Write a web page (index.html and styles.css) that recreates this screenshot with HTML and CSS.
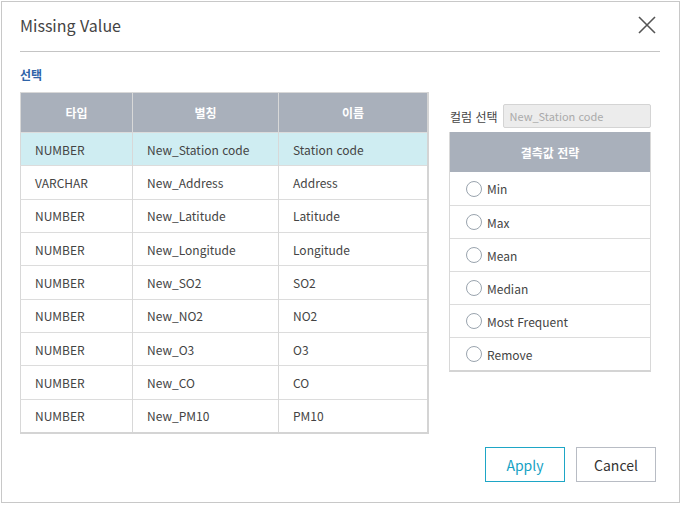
FILE: index.html
```html
<!DOCTYPE html>
<html lang="ko">
<head>
<meta charset="utf-8">
<link rel="stylesheet" href="styles.css">
</head>
<body>
<div class="dialog">
  <div class="dlg-head">
    <h1 class="dlg-title">Missing Value</h1>
    <svg class="close" width="20" height="20" viewBox="0 0 20 20"><path d="M2 2 L18 18 M18 2 L2 18" stroke="#555" stroke-width="1.6" fill="none"/></svg>
  </div>
  <div class="section-label">선택</div>
  <div class="content">
    <table class="grid">
      <thead>
        <tr><th class="c1">타입</th><th class="c2">별칭</th><th class="c3">이름</th></tr>
      </thead>
      <tbody>
        <tr class="sel"><td>NUMBER</td><td>New_Station code</td><td>Station code</td></tr>
        <tr><td>VARCHAR</td><td>New_Address</td><td>Address</td></tr>
        <tr><td>NUMBER</td><td>New_Latitude</td><td>Latitude</td></tr>
        <tr><td>NUMBER</td><td>New_Longitude</td><td>Longitude</td></tr>
        <tr><td>NUMBER</td><td>New_SO2</td><td>SO2</td></tr>
        <tr><td>NUMBER</td><td>New_NO2</td><td>NO2</td></tr>
        <tr><td>NUMBER</td><td>New_O3</td><td>O3</td></tr>
        <tr><td>NUMBER</td><td>New_CO</td><td>CO</td></tr>
        <tr><td>NUMBER</td><td>New_PM10</td><td>PM10</td></tr>
      </tbody>
    </table>
    <div class="side">
      <div class="col-pick">
        <span class="col-label">컬럼 선택</span>
        <div class="col-input">New_Station code</div>
      </div>
      <div class="strategy">
        <div class="st-head">결측값 전략</div>
        <label class="st-row"><span class="radio"></span>Min</label>
        <label class="st-row"><span class="radio"></span>Max</label>
        <label class="st-row"><span class="radio"></span>Mean</label>
        <label class="st-row"><span class="radio"></span>Median</label>
        <label class="st-row"><span class="radio"></span>Most Frequent</label>
        <label class="st-row"><span class="radio"></span>Remove</label>
      </div>
    </div>
  </div>
  <div class="actions">
    <button class="btn btn-apply">Apply</button>
    <button class="btn btn-cancel">Cancel</button>
  </div>
</div>
</body>
</html>
```
FILE: styles.css
```css
* { box-sizing: border-box; }
html, body { margin: 0; padding: 0; background: #fff; }
body {
  font-family: "Noto Sans CJK KR", "Noto Sans", sans-serif;
  color: #333;
  padding: 1px 0 0 1px;
}
.dialog {
  width: 679px;
  height: 502px;
  border: 1px solid #c8c8c8;
  background: #fff;
  padding: 0 19px 0 18px;
  position: relative;
}
.dlg-head {
  height: 50px;
  border-bottom: 1px solid #c4c4c4;
  display: flex;
  align-items: center;
  justify-content: space-between;
  padding-bottom: 3px;
}
.dlg-title {
  margin: 0;
  font-size: 16px;
  font-weight: 400;
  color: #444;
}
.close { margin-right: 3px; }
.section-label {
  margin-top: 14px;
  font-size: 12px;
  font-weight: 700;
  color: #2f64a8;
  line-height: 18px;
}
.content {
  margin-top: 8px;
  display: flex;
  align-items: flex-start;
  gap: 20px;
}
.grid {
  border-collapse: collapse;
  width: 409px;
  font-size: 12px;
  border-left: 1px solid #d8d8d8;
  border-top: 1px solid #d8d8d8;
  border-right: 2px solid #d4d4d4;
  border-bottom: 2px solid #d4d4d4;
}
.grid th {
  background: #a9b0bb;
  color: #fff;
  font-weight: 700;
  font-size: 12px;
  height: 40px;
  border-right: 1px solid #d8d8d8;
  padding: 0;
}
.grid td {
  height: 33.35px;
  padding: 0 0 0 14px;
  border-right: 1px solid #d8d8d8;
  border-top: 1px solid #dcdcdc;
  color: #444;
  text-align: left;
}
.c1 { width: 112px; }
.c2 { width: 146px; }
.grid tr.sel td { background: #cfedf2; }
.side {
  width: 202px;
  padding-top: 12px;
}
.col-pick {
  display: flex;
  align-items: center;
  gap: 5px;
  padding-left: 1px;
}
.col-label { font-size: 12px; color: #444; white-space: nowrap; }
.col-input {
  flex-shrink: 0;
  width: 148px;
  height: 24px;
  border: 1px solid #d4d4d4;
  background: #ececec;
  color: #aaa;
  font-size: 11px;
  line-height: 22px;
  padding-left: 6px;
  border-radius: 2px;
}
.strategy {
  margin-top: 4px;
  width: 202px;
  border-left: 1px solid #d8d8d8;
  border-right: 1px solid #d8d8d8;
  border-bottom: 2px solid #d4d4d4;
}
.st-head {
  height: 40px;
  background: #a9b0bb;
  color: #fff;
  font-size: 12px;
  font-weight: 700;
  display: flex;
  align-items: center;
  justify-content: center;
}
.st-row {
  height: 33px;
  display: flex;
  align-items: center;
  gap: 5px;
  padding-left: 16px;
  font-size: 12px;
  color: #444;
  border-top: 1px solid #dcdcdc;
}
.st-row:first-of-type { border-top: none; }
.radio {
  width: 16px;
  height: 16px;
  border: 1px solid #9aa4ae;
  border-radius: 50%;
  background: #fff;
}
.actions {
  position: absolute;
  right: 23px;
  bottom: 20px;
  display: flex;
  gap: 11px;
}
.btn {
  width: 80px;
  height: 35px;
  background: #fff;
  font-family: inherit;
  font-size: 14px;
  padding: 0;
  cursor: pointer;
}
.btn-apply { border: 1px solid #1ea6c6; color: #16a2c4; }
.btn-cancel { border: 1px solid #b8bcc4; color: #333; }
```
